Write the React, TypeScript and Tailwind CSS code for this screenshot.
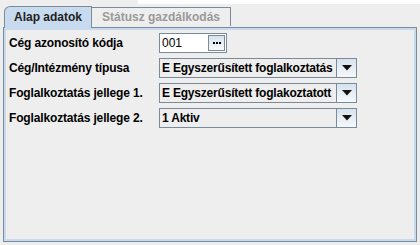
import type { ReactNode } from "react";

const FONT = "font-['Liberation_Sans',Arial,sans-serif]";

function ArrowButton() {
  return (
    <div className="flex h-full w-[20px] shrink-0 items-center justify-center border-l border-[#7a8a99] bg-gradient-to-b from-[#d6e2ee] to-[#f6f9fc]">
      <svg width="10" height="6" viewBox="0 0 10 6" aria-hidden>
        <path d="M0 0h10L5 5.5z" fill="#111" />
      </svg>
    </div>
  );
}

function Combo({ value }: { value: string }) {
  return (
    <div className="flex h-[20px] w-[198px] border border-[#7a8a99] bg-[#eeeeee]">
      <div className="flex flex-1 items-center overflow-hidden whitespace-nowrap pl-[2px] text-[12px] font-bold tracking-[-0.2px] text-black">
        {value}
      </div>
      <ArrowButton />
    </div>
  );
}

function CodeField() {
  return (
    <div className="flex h-[20px] w-[68px] border border-[#7a8a99] bg-white">
      <div className="flex flex-1 items-center pl-[2px] text-[12px] text-black">001</div>
      <div className="my-[1px] mr-[1px] flex w-[17px] items-center justify-center gap-[1px] border border-[#7a8a99] bg-gradient-to-b from-[#d6e2ee] to-[#f6f9fc]">
        <span className="h-[2px] w-[2px] bg-black" />
        <span className="h-[2px] w-[2px] bg-black" />
        <span className="h-[2px] w-[2px] bg-black" />
      </div>
    </div>
  );
}

function Row({ label, children }: { label: string; children: ReactNode }) {
  return (
    <div className="flex h-[20px] items-center">
      <div className="w-[150px] text-[12px] font-bold tracking-[-0.15px] text-black">{label}</div>
      {children}
    </div>
  );
}

export default function App() {
  return (
    <div className={`relative h-[245px] w-[420px] overflow-hidden bg-[#eeeeee] ${FONT}`}>
      <div className="absolute right-0 top-0 h-[4px] w-[282px] bg-white" />
      <div className="relative flex h-[27px] items-end pl-[4px]">
        <div className="relative z-10 -mb-[1px] flex h-[22px] w-[88px] items-center justify-center rounded-tl-[6px] border-l border-r border-t border-[#7a8a99] bg-[#c8daed] pb-[1px] text-[12px] font-bold text-[#222]">
          Alap adatok
        </div>
        <div className="mb-[1px] flex h-[19px] w-[139px] items-center justify-center border-r border-t border-[#7a8a99] bg-[#eeeeee] text-[12px] font-bold text-[#999]">
          Státusz gazdálkodás
        </div>
      </div>
      <div className="mx-[3px] h-[215px] border border-[#7a8a99]">
        <div className="flex h-full flex-col gap-[5px] border-2 border-[#c8daed] pl-[3px] pt-[3px]">
          <Row label="Cég azonosító kódja">
            <CodeField />
          </Row>
          <Row label="Cég/Intézmény típusa">
            <Combo value="E Egyszerűsített foglalkoztatás" />
          </Row>
          <Row label="Foglalkoztatás jellege 1.">
            <Combo value="E Egyszerűsített foglakoztatott" />
          </Row>
          <Row label="Foglalkoztatás jellege 2.">
            <Combo value="1 Aktiv" />
          </Row>
        </div>
      </div>
    </div>
  );
}
